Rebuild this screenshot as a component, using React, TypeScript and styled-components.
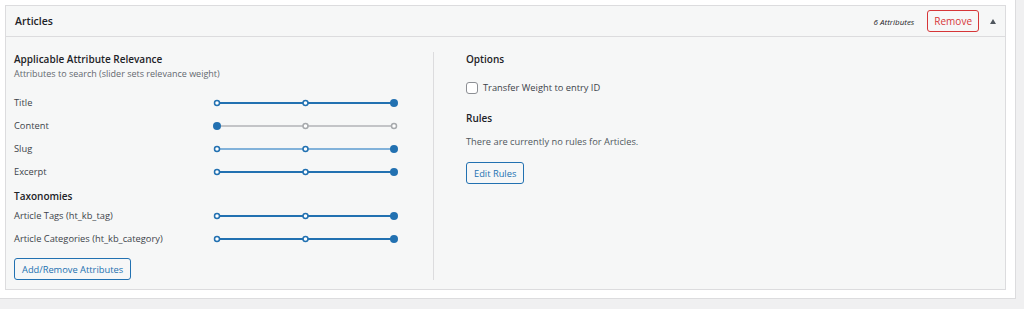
import React from "react";
import styled, { createGlobalStyle } from "styled-components";

const GlobalStyle = createGlobalStyle`
	html, body {
		margin: 0;
		padding: 0;
		background: #f0f0f1;
		font-family: "Open Sans", "Noto Sans", sans-serif;
		color: #3c434a;
	}
	* {
		box-sizing: border-box;
	}
`;

type Attribute = { label: string; value: number; faint?: boolean };

const attributes: Array<Attribute> = [
	{ label: "Title", value: 2 },
	{ label: "Content", value: 0 },
	{ label: "Slug", value: 2, faint: true },
	{ label: "Excerpt", value: 2 },
];

const taxonomies: Array<Attribute> = [
	{ label: "Article Tags (ht_kb_tag)", value: 2 },
	{ label: "Article Categories (ht_kb_category)", value: 2 },
];

const BLUE = "#2271b1";
const GREY = "#c3c4c7";

const Slider = ({ value, faint }: { value: number; faint?: boolean }) => {
	const xs = [5, 93.5, 182];
	const active = value > 0;
	const track = active ? (faint ? "#5b9bd0" : BLUE) : GREY;
	return (
		<svg width="190" height="12" viewBox="0 0 190 12">
			<line
				x1={xs[0]}
				y1="6"
				x2={xs[2]}
				y2="6"
				stroke={track}
				strokeWidth={faint ? 1.5 : 2}
			/>
			{xs.map((x, i) =>
				i === value ? (
					<circle key={i} cx={x} cy="6" r="4" fill={BLUE} />
				) : (
					<circle
						key={i}
						cx={x}
						cy="6"
						r="2.5"
						fill="#fff"
						stroke={active ? BLUE : "#a7aaad"}
						strokeWidth="1.5"
					/>
				)
			)}
		</svg>
	);
};

const App = () => {
	return (
		<>
			<GlobalStyle />
			<Page>
				<Panel>
					<Header>
						<Title>Articles</Title>
						<Count>6 Attributes</Count>
						<RemoveButton>Remove</RemoveButton>
						<Toggle />
					</Header>
					<Body>
						<LeftColumn>
							<Heading>Applicable Attribute Relevance</Heading>
							<Hint>Attributes to search (slider sets relevance weight)</Hint>
							<Rows>
								{attributes.map((a) => (
									<Row key={a.label}>
										<Label>{a.label}</Label>
										<Slider value={a.value} faint={a.faint} />
									</Row>
								))}
							</Rows>
							<Heading $top={6}>Taxonomies</Heading>
							<Rows>
								{taxonomies.map((a) => (
									<Row key={a.label}>
										<Label>{a.label}</Label>
										<Slider value={a.value} />
									</Row>
								))}
							</Rows>
							<Button $top={8}>Add/Remove Attributes</Button>
						</LeftColumn>
						<RightColumn>
							<Heading>Options</Heading>
							<CheckRow>
								<Checkbox />
								<Label>Transfer Weight to entry ID</Label>
							</CheckRow>
							<Heading $top={17}>Rules</Heading>
							<Note>There are currently no rules for Articles.</Note>
							<Button $top={13}>Edit Rules</Button>
						</RightColumn>
					</Body>
				</Panel>
			</Page>
		</>
	);
};

export default App;

const Page = styled.div`
	width: 1016px;
	height: 299px;
	padding: 5px 0 0 5px;
	background: #fff;
	border-right: 1px solid #dcdcde;
	border-bottom: 1px solid #dcdcde;
`;

const Panel = styled.div`
	width: 1001px;
	height: 285px;
	border: 1px solid #dcdcde;
	background: #f6f7f7;
`;

const Header = styled.div`
	display: flex;
	align-items: center;
	height: 31px;
	padding: 0 9px 0 9px;
	border-bottom: 1px solid #dcdcde;
`;

const Title = styled.div`
	flex: 1;
	font-size: 10.5px;
	font-weight: 600;
	color: #1d2327;
`;

const Count = styled.span`
	font-size: 8px;
	font-style: italic;
	color: #1d2327;
	margin-right: 13px;
`;

const RemoveButton = styled.button`
	height: 22px;
	padding: 0 6px;
	border: 1px solid #d63638;
	border-radius: 3px;
	background: #f6f7f7;
	color: #d63638;
	font-family: inherit;
	font-size: 10px;
	margin-right: 11px;
`;

const Toggle = styled.span`
	width: 0;
	height: 0;
	border-left: 3.5px solid transparent;
	border-right: 3.5px solid transparent;
	border-bottom: 5px solid #50575e;
`;

const Body = styled.div`
	display: flex;
	padding: 15px 0 0 8px;
`;

const LeftColumn = styled.div`
	width: 420px;
	height: 228px;
	border-right: 1px solid #dcdcde;
	display: flex;
	flex-direction: column;
	align-items: flex-start;
`;

const RightColumn = styled.div`
	padding-left: 32px;
	display: flex;
	flex-direction: column;
	align-items: flex-start;
`;

const Heading = styled.div<{ $top?: number }>`
	font-size: 10px;
	font-weight: 600;
	line-height: 15px;
	color: #1d2327;
	margin-top: ${({ $top }) => $top || 0}px;
`;

const Hint = styled.div`
	font-size: 9px;
	line-height: 14px;
	color: #646970;
	margin-bottom: 10px;
`;

const Rows = styled.div`
	display: flex;
	flex-direction: column;
	width: 100%;
`;

const Row = styled.div`
	display: grid;
	grid-template-columns: 198px 190px;
	align-items: center;
	height: 23px;
`;

const Label = styled.span`
	font-size: 9.3px;
	color: #3c434a;
`;

const Note = styled(Label)`
	margin-top: 9px;
	line-height: 14px;
	color: #50575e;
`;

const CheckRow = styled.div`
	display: flex;
	align-items: center;
	gap: 5px;
	margin-top: 14px;
`;

const Checkbox = styled.span`
	width: 12px;
	height: 12px;
	border: 1px solid #8c8f94;
	border-radius: 3px;
	background: #fff;
`;

const Button = styled.button<{ $top?: number }>`
	height: 22px;
	padding: 0 7px;
	margin-top: ${({ $top }) => $top || 0}px;
	border: 1px solid ${BLUE};
	border-radius: 3px;
	background: #f6f7f7;
	color: ${BLUE};
	font-family: inherit;
	font-size: 9.3px;
`;
